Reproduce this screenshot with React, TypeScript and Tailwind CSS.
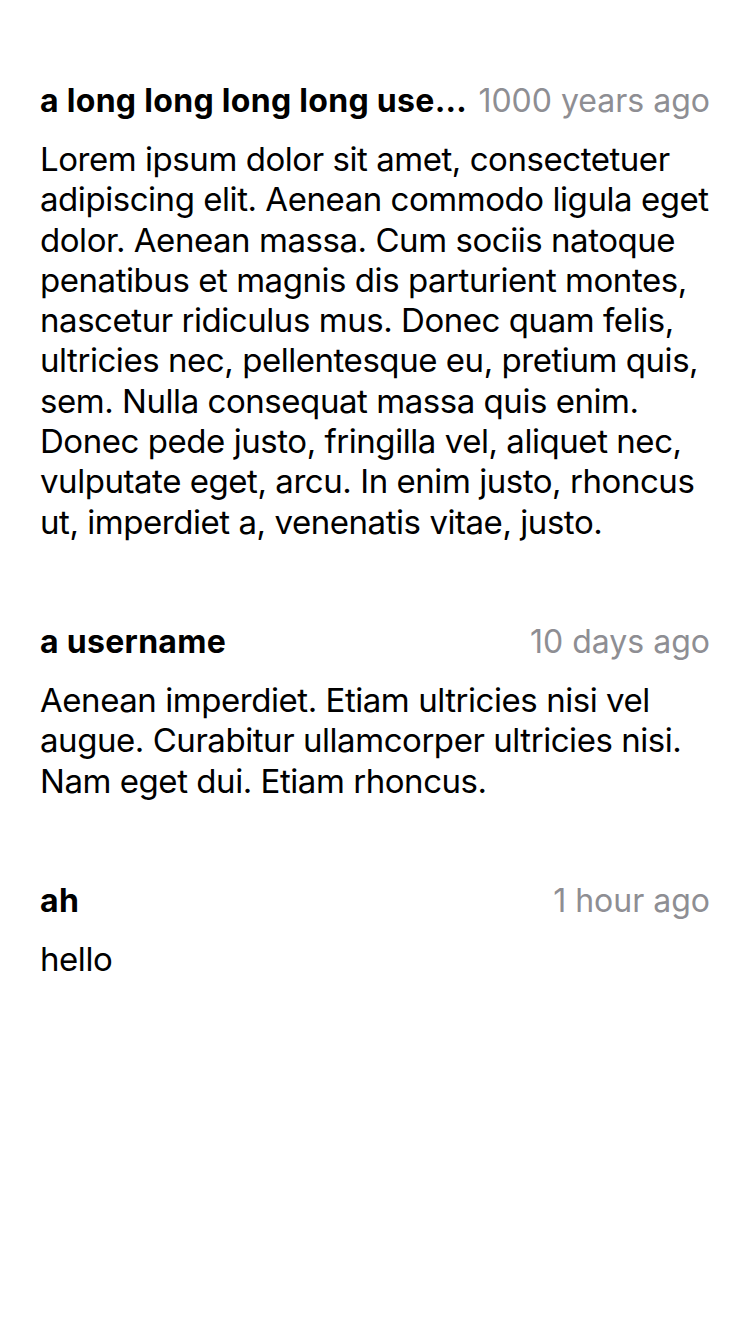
const comments = [
  {
    id: 1,
    user: 'a long long long long username that goes on',
    time: '1000 years ago',
    body: 'Lorem ipsum dolor sit amet, consectetuer adipiscing elit. Aenean commodo ligula eget dolor. Aenean massa. Cum sociis natoque penatibus et magnis dis parturient montes, nascetur ridiculus mus. Donec quam felis, ultricies nec, pellentesque eu, pretium quis, sem. Nulla consequat massa quis enim. Donec pede justo, fringilla vel, aliquet nec, vulputate eget, arcu. In enim justo, rhoncus ut, imperdiet a, venenatis vitae, justo.',
  },
  {
    id: 2,
    user: 'a username',
    time: '10 days ago',
    body: 'Aenean imperdiet. Etiam ultricies nisi vel augue. Curabitur ullamcorper ultricies nisi. Nam eget dui. Etiam rhoncus.',
  },
  {
    id: 3,
    user: 'ah',
    time: '1 hour ago',
    body: 'hello',
  },
];

const Comment = ({ user, time, body }: { user: string; time: string; body: string }) => (
  <div className="flex flex-col">
    <div className="flex h-10 items-center justify-between gap-2">
      <span className="min-w-0 truncate text-[32px] font-bold tracking-[0.3px] text-black">
        {user}
      </span>
      <span className="shrink-0 text-[32px] text-[#8e8e93]">{time}</span>
    </div>
    <p className="mt-[18px] text-[33px] leading-[40.3px] tracking-[-0.45px] text-black">{body}</p>
  </div>
);

export default function App() {
  return (
    <div
      className="min-h-[1334px] w-[750px] bg-white px-10 pt-[81px]"
      style={{ fontFamily: 'Inter, "Noto Sans", sans-serif' }}
    >
      <div className="flex flex-col gap-[80px]">
        {comments.map(c => (
          <Comment key={c.id} user={c.user} time={c.time} body={c.body} />
        ))}
      </div>
    </div>
  );
}
